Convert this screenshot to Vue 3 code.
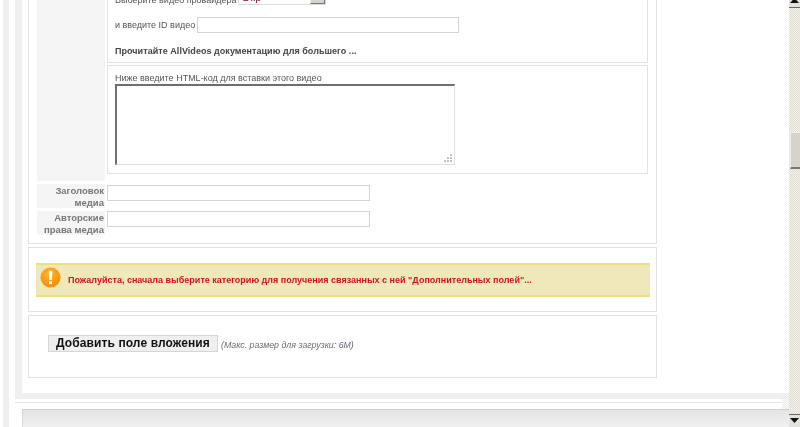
<script setup>
const scrollThumbTop = 132
</script>

<template>
  <div class="page">
    <div class="main">
      <div class="panel">
        <div class="box box-form">
          <div class="label-tall"></div>
          <div class="fields">
            <div class="fieldset">
              <div class="row provider">
                <span class="provider-text">Выберите видео провайдера</span>
                <div class="select">
                  <span class="select-value">Dlip</span>
                  <span class="select-btn"></span>
                </div>
              </div>
              <div class="row video-id">
                <span>и введите ID видео</span>
                <input class="input-id" type="text" />
              </div>
              <p class="docs">Прочитайте AllVideos документацию для большего ...</p>
            </div>
            <div class="fieldset embed">
              <label class="embed-label">Ниже введите HTML-код для вставки этого видео</label>
              <div class="textarea">
                <svg class="grip" width="9" height="9" viewBox="0 0 9 9">
                  <path d="M6 0h2v2H6zM3 3h2v2H3zM6 3h2v2H6zM0 6h2v2H0zM3 6h2v2H3zM6 6h2v2H6z" fill="#c4c4c4" />
                </svg>
              </div>
            </div>
          </div>
          <div class="label">Заголовок медиа</div>
          <div class="field"><input class="input-wide first" type="text" /></div>
          <div class="label">Авторские права медиа</div>
          <div class="field"><input class="input-wide" type="text" /></div>
        </div>

        <div class="box box-notice">
          <div class="notice">
            <svg class="notice-icon" width="21" height="21" viewBox="0 0 22 22">
              <defs>
                <radialGradient id="orange" cx="45%" cy="35%" r="70%">
                  <stop offset="0" stop-color="#ffb52e" />
                  <stop offset="1" stop-color="#f58a05" />
                </radialGradient>
              </defs>
              <circle cx="11" cy="11" r="10.5" fill="url(#orange)" />
              <path d="M9 4h4l-.8 9.500H9.800z" fill="#fff" />
              <rect x="9.400" y="15" width="3.200" height="3" fill="#fff" />
            </svg>
            <span>Пожалуйста, сначала выберите категорию для получения связанных с ней "Дополнительных полей"...</span>
          </div>
        </div>

        <div class="box box-attach">
          <button class="add-btn" type="button">Добавить поле вложения</button>
          <em class="hint">(Макс. размер для загрузки: 6М)</em>
        </div>
      </div>

      <div class="lower">
        <div class="lower-frame">
          <div class="lower-bar"></div>
        </div>
      </div>
    </div>

    <div class="scrollbar">
      <div class="arrow arrow-up"><svg width="9" height="5" viewBox="0 0 9 5"><path d="M4.500 0L9 5H0z" fill="#111" /></svg></div>
      <div class="track" :style="{ paddingTop: scrollThumbTop - 8 + 'px' }">
        <div class="thumb"></div>
      </div>
      <div class="arrow arrow-down"><svg width="9" height="5" viewBox="0 0 9 5"><path d="M0 0h9L4.500 5z" fill="#111" /></svg></div>
    </div>
  </div>
</template>

<style>
body {
  background: #fff;
}
</style>

<style scoped>
.page {
  display: flex;
  width: 800px;
  height: 427px;
  overflow: hidden;
  background: #fff;
  font-family: "Liberation Sans", Arial, sans-serif;
  font-size: 9px;
  color: #555;
  filter: blur(0.35px);
}

.main {
  flex: none;
  box-sizing: border-box;
  width: 786px;
  height: 427px;
  margin-left: 3px;
  padding-left: 6px;
  border-left: 6px solid #efefef;
  overflow: hidden;
}

.panel {
  display: flex;
  flex-direction: column;
  justify-content: flex-end;
  gap: 3px;
  box-sizing: border-box;
  height: 399px;
  padding: 0 0 15px 6px;
  border-left: 7px solid #efefef;
  border-bottom: 6px solid #efefef;
}

.box {
  flex: none;
  box-sizing: border-box;
  width: 629px;
  background: #fff;
  border: 1px solid #e2e2e2;
}

.box-form {
  display: grid;
  grid-template-columns: 68px 541px;
  column-gap: 2px;
  row-gap: 3px;
  padding: 0 8px 8px;
}

.label-tall {
  background: #f5f5f5;
}

.fields {
  display: flex;
  flex-direction: column;
  gap: 2px;
  padding-bottom: 7px;
}

.fieldset {
  box-sizing: border-box;
  border: 1px solid #e2e2e2;
  padding: 0 7px;
}

.row {
  display: flex;
  align-items: center;
  gap: 2px;
}

.provider {
  height: 18px;
  align-items: flex-end;
  margin-bottom: 12px;
}

.select {
  display: flex;
  justify-content: space-between;
  box-sizing: border-box;
  width: 88px;
  height: 16px;
  margin-left: -1px;
  padding-left: 4px;
  border: 1px solid #ddd;
  color: #7a1c2e;
  font-size: 11px;
  line-height: 14px;
}

.select-btn {
  width: 13px;
  background: #d8d4cc;
  border-left: 1px solid #eee;
  border-bottom: 1px solid #777;
  border-right: 1px solid #777;
}

input {
  box-sizing: border-box;
  display: block;
  height: 16px;
  margin: 0;
  padding: 0;
  border: 1px solid #d4d4d4;
  background: #fff;
}

.input-id {
  width: 262px;
}

.docs {
  margin: 13px 0 5px;
  font-weight: bold;
  letter-spacing: 0.04px;
  color: #444;
  line-height: 11px;
}

.embed {
  height: 109px;
  padding-top: 7px;
}

.embed-label {
  display: block;
  line-height: 11px;
}

.textarea {
  position: relative;
  box-sizing: border-box;
  width: 340px;
  height: 81px;
  border-style: solid;
  border-width: 2px 1px 1px 2px;
  border-color: #6e6e6e #e2dfd8 #e2dfd8 #6e6e6e;
  background: #fff;
}

.grip {
  position: absolute;
  right: 1px;
  bottom: 1px;
}

.label {
  box-sizing: border-box;
  height: 24px;
  padding: 1px 1px 0 0;
  background: #f5f5f5;
  color: #777;
  font-weight: bold;
  font-size: 9.500px;
  line-height: 12px;
  text-align: right;
}

.field {
  height: 24px;
}

.input-wide {
  width: 263px;
}

.input-wide.first {
  margin-top: 1px;
}

.box-notice {
  height: 65px;
  padding-top: 15px;
}

.notice {
  display: flex;
  align-items: center;
  gap: 7px;
  box-sizing: border-box;
  width: 614px;
  height: 34px;
  margin-left: 7px;
  padding-left: 4px;
  background: #efe8ba;
  border-top: 2px solid #efdc85;
  border-bottom: 2px solid #efdc85;
  color: #d8121e;
  font-weight: bold;
}

.notice-icon {
  margin-top: -5px;
}

.box-attach {
  display: flex;
  align-items: center;
  height: 63px;
  padding-left: 19px;
  padding-bottom: 6px;
}

.add-btn {
  box-sizing: border-box;
  width: 170px;
  height: 17px;
  margin-right: 3px;
  padding: 0;
  border: 1px solid #d6d6d6;
  background: #efefef;
  color: #111;
  font-family: "Liberation Sans", Arial, sans-serif;
  font-size: 12px;
  font-weight: bold;
  letter-spacing: 0.1px;
  line-height: 15px;
}

.hint {
  margin-top: 2px;
  color: #666d78;
  font-size: 8.800px;
}

.lower {
  box-sizing: border-box;
  width: 774px;
  height: 28px;
  padding-top: 3px;
  border-right: 7px solid #f3f3f3;
}

.lower-frame {
  height: 25px;
  padding: 6px 0 0 7px;
  border-top: 1px solid #e2e2e2;
}

.lower-bar {
  box-sizing: border-box;
  width: 767px;
  height: 18px;
  border-top: 1px solid #cfcfcf;
  border-left: 1px solid #d8d8d8;
  background: linear-gradient(#e4e4e4, #f0f0f0);
}

.scrollbar {
  display: flex;
  flex-direction: column;
  flex: none;
  width: 11px;
  height: 427px;
  background: repeating-conic-gradient(#dedbd3 0 25%, #f4f3ef 0 50%) 0 0 / 2px 2px;
}

.arrow {
  display: flex;
  justify-content: center;
  flex: none;
  box-sizing: border-box;
  background: #e4e2dc;
}

.arrow-up {
  height: 8px;
  border-bottom: 1px solid #666;
}

.arrow-up svg {
  margin-top: -2px;
}

.arrow-down {
  height: 13px;
  padding-top: 3px;
  border-top: 1px solid #666;
}

.track {
  flex: 1;
}

.thumb {
  box-sizing: border-box;
  width: 10px;
  height: 37px;
  margin-left: 1px;
  background: #d6d3cb;
  border-top: 1px solid #eeeeea;
  border-left: 1px solid #eeeeea;
  border-bottom: 2px solid #777;
}
</style>
